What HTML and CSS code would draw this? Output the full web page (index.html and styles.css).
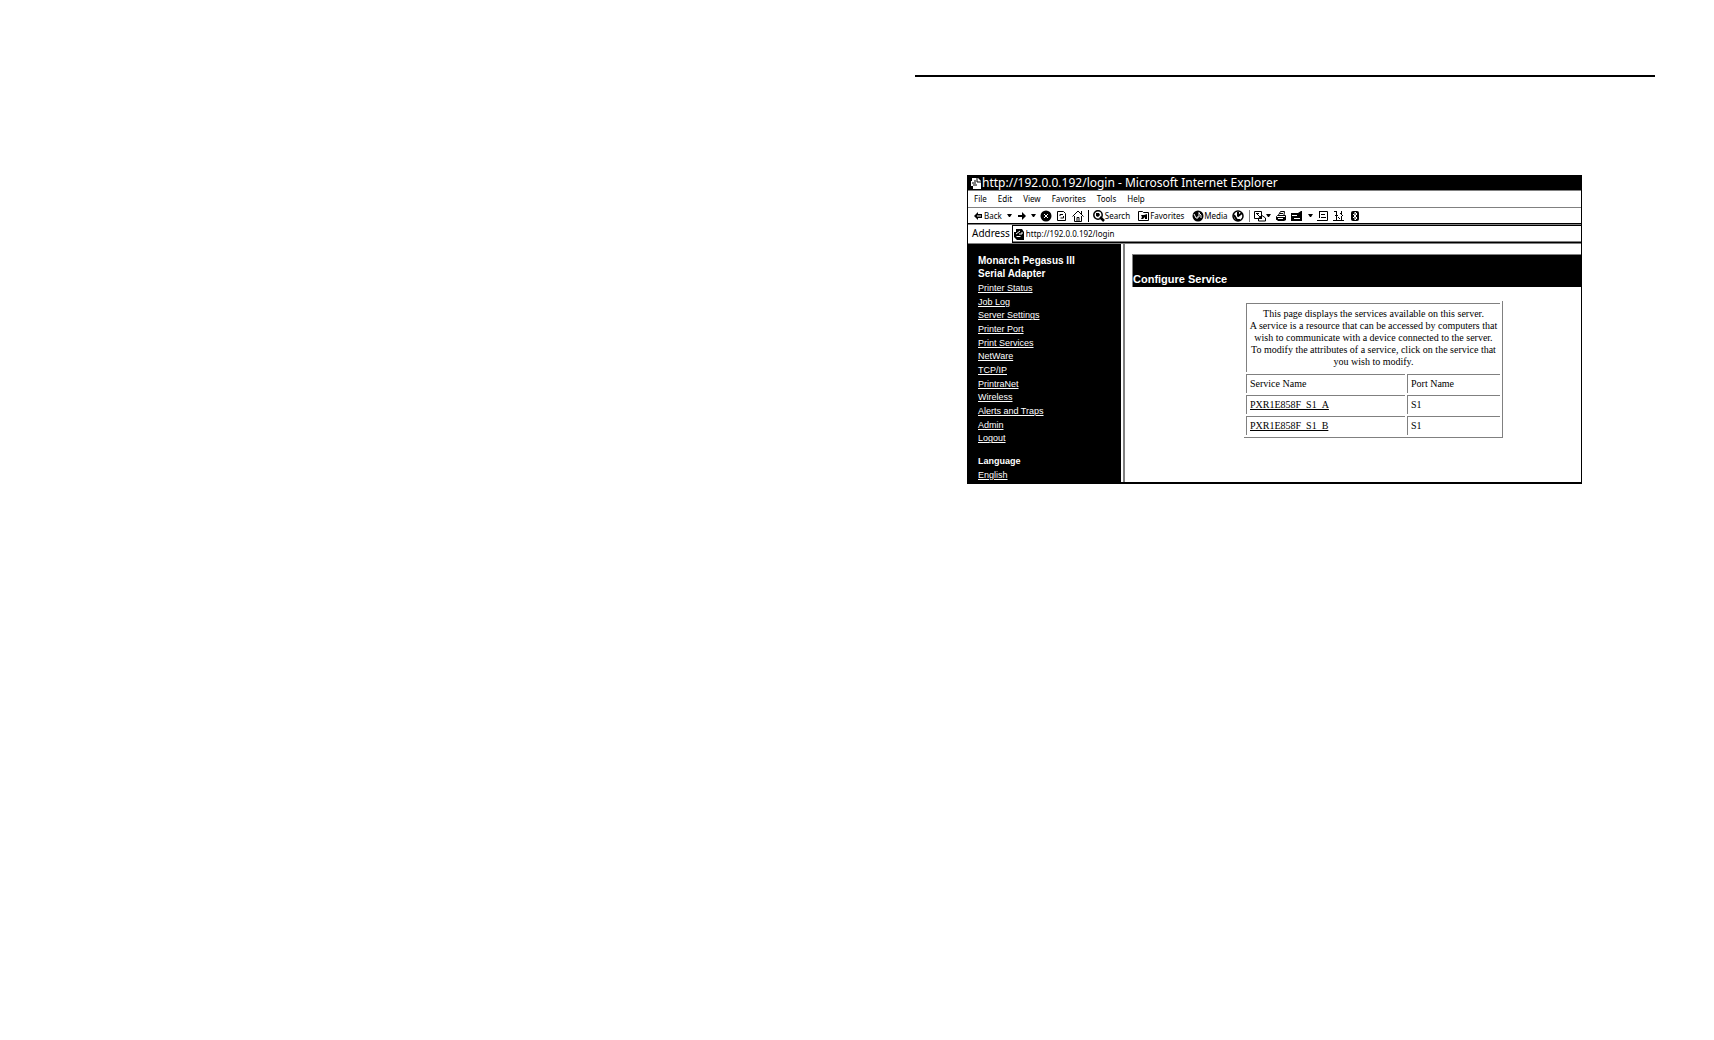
FILE: index.html
```html
<!DOCTYPE html>
<html lang="en">
<head>
<meta charset="utf-8">
<title>Configure Service</title>
<link rel="stylesheet" href="styles.css">
</head>
<body>
<main class="page">
  <hr class="rule">
  <section class="window">
    <header class="titlebar">
      <svg class="icon" viewBox="0 0 12 12"><path d="M2 1h6l3 3v8H3V9H1V4h1z" fill="#fff"/><path d="M7 1v4h4M2 6h4M3 8h4M4 4h2" stroke="#000" fill="none"/></svg>
      <span>http://192.0.0.192/login - Microsoft Internet Explorer</span>
    </header>
    <nav class="menubar" aria-label="Menu">
      <button type="button">File</button>
      <button type="button">Edit</button>
      <button type="button">View</button>
      <button type="button">Favorites</button>
      <button type="button">Tools</button>
      <button type="button">Help</button>
    </nav>
    <div class="toolbar">
      <button type="button" class="back"><svg class="small" viewBox="0 0 8 8"><path d="M0 4l4-4v2h4v4H4v2z"/><path d="M3 4h4" stroke="#fff"/></svg>Back</button>
      <button type="button" class="drop wide" aria-label="Back history"><svg class="caret" viewBox="0 0 5 3"><path d="M0 0h5L3 3H2z"/></svg></button>
      <button type="button" aria-label="Forward"><svg class="small" viewBox="0 0 8 8"><path d="M0 3h4V0l4 4-4 4V5H0z"/></svg></button>
      <button type="button" class="drop" aria-label="Forward history"><svg class="caret" viewBox="0 0 5 3"><path d="M0 0h5L3 3H2z"/></svg></button>
      <button type="button" aria-label="Stop"><svg class="icon" viewBox="0 0 12 12"><circle cx="6" cy="6" r="5.500"/><path d="M4 4l4 4M8 4L4 8" stroke="#fff"/></svg></button>
      <button type="button" aria-label="Refresh"><svg class="icon" viewBox="0 0 12 12"><path d="M1.500 1.500h6l2 2v7h-8z" fill="none" stroke="#000"/><path d="M4 6V4.500h3M7.500 6v2H4.500" fill="none" stroke="#000"/></svg></button>
      <button type="button" aria-label="Home"><svg class="icon" viewBox="0 0 12 12"><path d="M.5 6.500L6 1l5.500 5.500M2.500 6v5.500h7V6M9.500 1v3M5 11V7.500h2V11" fill="none" stroke="#000"/></svg></button>
      <i class="bar"></i>
      <button type="button"><svg class="icon" viewBox="0 0 12 12"><circle cx="5" cy="5" r="4.200" fill="none" stroke="#000" stroke-width="1.500"/><path d="M3 3h3l1 2-2 2-2-1z"/><path d="M7 7l4 4" stroke="#000" stroke-width="2.500"/></svg>Search</button>
      <button type="button" class="fav"><svg class="icon" viewBox="0 0 12 12"><path d="M.5 10.500v-9h4l1 1h5v8z" fill="none" stroke="#000"/><path d="M3 9l1-2-1-2h3l3-1v5H7V7L5 9z"/></svg>Favorites</button>
      <button type="button" class="media"><svg class="icon" viewBox="0 0 12 12"><circle cx="6" cy="6" r="5.500"/><path d="M7 2v5H5v2M7 3l2 2v3M2 4l2 4" stroke="#fff" fill="none"/></svg>Media</button>
      <button type="button" aria-label="History"><svg class="icon" viewBox="0 0 12 12"><circle cx="6" cy="6" r="5" fill="none" stroke="#000" stroke-width="1.500"/><path d="M6 6.500V2M5.500 6.500L10 3M2 5l3 5h3" stroke="#000" stroke-width="2" fill="none"/></svg></button>
      <i class="bar thin"></i>
      <button type="button" aria-label="Mail"><svg class="icon" viewBox="0 0 12 12"><path d="M.5 1.500h7v7h-7zM2 3.500h3M4.500 8L8 5.500 11.500 8v3h-7zM2 3l6 6" fill="none" stroke="#000"/></svg><svg class="caret" viewBox="0 0 5 3"><path d="M0 0h5L3 3H2z"/></svg></button>
      <button type="button" aria-label="Print"><svg class="icon" viewBox="0 0 12 12"><path d="M3.500 5l2-3.500h4L9 5M2.500 5.500h8v4h-9v-3zM5 3.500h3" fill="none" stroke="#000"/><path d="M1 7h10v3l-2 1H3L1 9z"/><path d="M3 8.500h5" stroke="#fff"/></svg></button>
      <button type="button" aria-label="Edit page"><svg class="icon" viewBox="0 0 12 12"><path d="M0 3h7l3-2h1v10H0z"/><path d="M1 5.500h5M3 8.500h6" stroke="#fff"/></svg></button>
      <button type="button" class="drop" aria-label="Edit options"><svg class="caret" viewBox="0 0 5 3"><path d="M0 0h5L3 3H2z"/></svg></button>
      <button type="button" aria-label="Discuss"><svg class="icon" viewBox="0 0 12 12"><path d="M2.500 1.500h8v9H0M2.500 1v7M4 4.500h4M4 7.500h5" fill="none" stroke="#000"/></svg></button>
      <button type="button" aria-label="Messenger"><svg class="icon" viewBox="0 0 12 12"><path d="M1 1.500h3M3.500 2v3M2 5.500h3M8.500 1v3M7 3l3 3M3.500 6v4M0 10.500h11M8.500 6v4M5 7l2 2" fill="none" stroke="#000"/></svg></button>
      <button type="button" aria-label="Bluetooth"><svg class="icon" viewBox="0 0 12 12"><rect x="2" y="1" width="8" height="10" rx="2"/><path d="M4 4l4 4-2 2V2l2 2-4 4" fill="none" stroke="#fff"/></svg></button>
    </div>
    <div class="address">
      <label for="url">Address</label>
      <div class="field">
        <svg class="icon" viewBox="0 0 12 12"><path d="M1 4h2V1h6l2 3v8H4l-3-3z"/><path d="M3 6l4-3M3.500 8.500h4M6 6h3V4" stroke="#fff" fill="none"/></svg>
        <input id="url" type="text" value="http://192.0.0.192/login">
      </div>
    </div>
    <div class="content">
      <aside class="sidebar">
        <h2>Monarch Pegasus III<br>Serial Adapter</h2>
        <ul>
          <li><a href="#">Printer Status</a></li>
          <li><a href="#">Job Log</a></li>
          <li><a href="#">Server Settings</a></li>
          <li><a href="#">Printer Port</a></li>
          <li><a href="#">Print Services</a></li>
          <li><a href="#">NetWare</a></li>
          <li><a href="#">TCP/IP</a></li>
          <li><a href="#">PrintraNet</a></li>
          <li><a href="#">Wireless</a></li>
          <li><a href="#">Alerts and Traps</a></li>
          <li><a href="#">Admin</a></li>
          <li><a href="#">Logout</a></li>
        </ul>
        <h3>Language</h3>
        <a href="#">English</a>
      </aside>
      <div class="main">
        <h1>Configure Service</h1>
        <table>
          <tbody>
            <tr><td colspan="2" class="intro">This page displays the services available on this server.<br>A service is a resource that can be accessed by computers that<br>wish to communicate with a device connected to the server.<br>To modify the attributes of a service, click on the service that<br>you wish to modify.</td></tr>
            <tr><th scope="col" class="name">Service Name</th><th scope="col">Port Name</th></tr>
            <tr><td><a href="#">PXR1E858F_S1_A</a></td><td>S1</td></tr>
            <tr><td><a href="#">PXR1E858F_S1_B</a></td><td>S1</td></tr>
          </tbody>
        </table>
      </div>
    </div>
  </section>
</main>
</body>
</html>
```
FILE: styles.css
```css
* { box-sizing: border-box; }
body { margin: 0; background: #fff; color: #000; }
.page { padding: 75px 59px 0 915px; }
.rule { margin: 0; border: 0; height: 2px; background: #000; }
.window {
  margin: 98px 73px 0 52px;
  border: solid #000;
  border-width: 0 1px 2px;
  font: 8px/14px "Noto Sans", sans-serif;
}
button { font: inherit; color: inherit; background: none; border: 0; padding: 0; display: flex; align-items: center; white-space: nowrap; }
svg { display: block; flex: none; }
.icon { width: 12px; height: 12px; }
.small { width: 8px; height: 8px; }
.caret { width: 5px; height: 3px; }
.titlebar {
  display: flex; align-items: center; height: 16px; padding-left: 2px;
  background: #000; color: #fff; border-bottom: 1px solid #808080;
  font: 12px/15px "Noto Sans", sans-serif; white-space: nowrap;
}
.menubar { display: flex; gap: 11px; height: 17px; padding-left: 6px; border-bottom: 1px solid #808080; }
.toolbar { display: flex; align-items: center; gap: 4px; height: 16px; padding-left: 6px; border-bottom: 1px solid #000; }
.back { gap: 2px; }
.drop { margin-left: 1px; }
.wide { margin: 0 2px 0 1px; }
.fav, .media { margin-left: 4px; }
.bar { width: 1px; height: 12px; background: #000; }
.thin { background: #808080; margin-left: 1px; }
.address { display: flex; height: 20px; border-top: 1px solid #808080; border-bottom: 1px solid #808080; padding-left: 4px; gap: 2px; font-size: 10px; line-height: 16px; }
.field { flex: 1; display: flex; align-items: center; gap: 1px; border: solid #000; border-width: 1px 0 1px 1px; box-shadow: inset 0 -1px #808080; }
.field input { flex: 1; min-width: 0; border: 0; padding: 0; outline: 0; background: none; font: 8px/14px "Noto Sans", sans-serif; height: 14px; }
.content { display: flex; }
.sidebar { width: 153px; background: #000; color: #fff; padding: 10px 0 0 10px; font: 9px/14px "Liberation Sans", sans-serif; }
.sidebar a { color: #fff; }
.sidebar h2 { margin: 0; font-size: 10px; line-height: 13px; }
.sidebar ul { list-style: none; margin: 2px 0 8px; padding: 0; display: grid; grid-auto-rows: 1fr; height: 164px; line-height: 13px; }
.sidebar h3 { margin: 0; font-size: 9px; line-height: 14px; }
.main { flex: 1; margin-left: 2px; border-left: 2px solid #808080; padding: 10px 0 0 7px; }
.main h1 { margin: 0; background: #000; color: #fff; border-top: 1px solid #808080; border-left: 1px solid #808080; height: 33px; padding-top: 17px; font: bold 11px/15px "Liberation Sans", sans-serif; }
table { margin: 14px auto 0 112px; width: 259px; border: solid #808080; border-width: 0 1px 1px 0; border-collapse: separate; border-spacing: 2px; font: 10px/12px "Liberation Serif", serif; }
td, th { border: solid #808080; border-width: 1px 0 0 1px; padding: 3px 0 3px 3px; text-align: left; font-weight: normal; white-space: nowrap; }
.intro { text-align: center; padding: 4px 0; }
.name { width: 159px; }
td a { color: #000; }
```
